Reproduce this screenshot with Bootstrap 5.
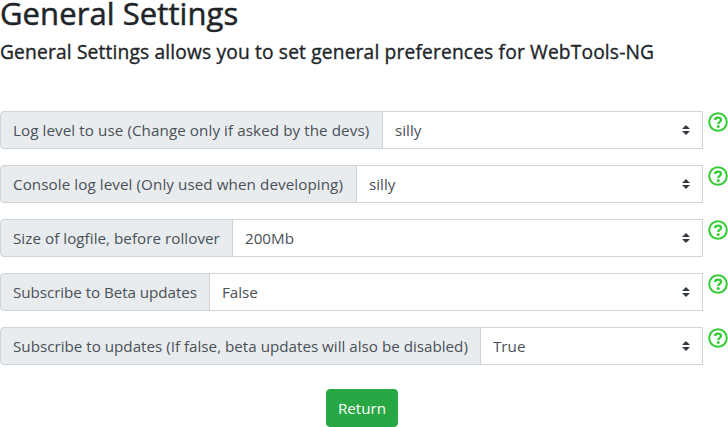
<!DOCTYPE html>
<html lang="en">
<head>
<meta charset="utf-8">
<meta name="viewport" content="width=device-width, initial-scale=1">
<title>General Settings</title>
<link href="https://cdn.jsdelivr.net/npm/bootstrap@5.3.0/dist/css/bootstrap.min.css" rel="stylesheet">
<style>
body { font-family: "Open Sans", "Noto Sans", sans-serif; font-size: 16px; color: #212529; overflow: hidden; }
.page-title { font-size: 31px; line-height: 26px; margin: 0 0 14px; font-weight: 500; -webkit-text-stroke: .5px #212529; letter-spacing: .08px; }
.page-lead { font-size: 19.2px; line-height: 24px; font-weight: 500; margin: 0 0 47px; -webkit-text-stroke: .35px #212529; letter-spacing: .16px; }
.page-title span, .page-lead span, .setting-label span { white-space: nowrap; }
.setting-row { margin-bottom: 16px; }
.setting-row .input-group { width: 703px; height: 38px; }
.setting-label { background: #e9ecef; border-color: #ced4da; color: #495057; font-size: 15.2px; padding: 0 12px; border-radius: 4px; }
.setting-select { border-color: #ced4da; border-radius: 0; color: #495057; font-size: 15.2px; padding: 0 28px 0 12px;
  background: #fff url("data:image/svg+xml,%3csvg xmlns='http://www.w3.org/2000/svg' viewBox='0 0 4 5'%3e%3cpath fill='%23343a40' d='M2 0L0 2h4zm0 5L0 3h4z'/%3e%3c/svg%3e") no-repeat right 12px center / 8px 10px; }
.w-log { width: 383px; letter-spacing: .08px; } .w-console { width: 357px; letter-spacing: .08px; } .w-size { width: 233px; letter-spacing: .04px; } .w-beta { width: 210px; letter-spacing: -.06px; } .w-updates { width: 481px; }
.help-icon { width: 20px; height: 20px; margin: .5px 0 0 5px; color: #32cd32; }
.return-btn { background: #28a745; border-color: #28a745; color: #fff; width: 72px; height: 38px; padding: 0; font-size: 15.2px; border-radius: 4px; margin: 8px 0 0 326px; }
</style>
</head>
<body>
<svg class="d-none" xmlns="http://www.w3.org/2000/svg">
  <symbol id="help" viewBox="0 0 20 20">
    <circle cx="10" cy="10" r="8.8" fill="none" stroke="currentColor" stroke-width="2"/>
    <path d="M6.9 8.1C7.3 6.4 8.4 5.7 10 5.7c1.8 0 3 .9 3 2.3 0 1.9-2.8 2-2.8 4" fill="none" stroke="currentColor" stroke-width="2.3"/>
    <circle cx="10.2" cy="14.4" r="1.5" fill="currentColor"/>
  </symbol>
</svg>
<main>
  <h2 class="page-title"><span>General Settings</span></h2>
  <h5 class="page-lead"><span>General Settings allows you to set general preferences for WebTools-NG</span></h5>
  <div class="setting-row d-flex align-items-start">
    <div class="input-group flex-nowrap flex-shrink-0">
      <label class="input-group-text setting-label w-log" for="s1"><span>Log level to use (Change only if asked by the devs)</span></label>
      <select class="form-select setting-select" id="s1"><option>silly</option></select>
    </div>
    <svg class="help-icon flex-shrink-0"><use href="#help"/></svg>
  </div>
  <div class="setting-row d-flex align-items-start">
    <div class="input-group flex-nowrap flex-shrink-0">
      <label class="input-group-text setting-label w-console" for="s2"><span>Console log level (Only used when developing)</span></label>
      <select class="form-select setting-select" id="s2"><option>silly</option></select>
    </div>
    <svg class="help-icon flex-shrink-0"><use href="#help"/></svg>
  </div>
  <div class="setting-row d-flex align-items-start">
    <div class="input-group flex-nowrap flex-shrink-0">
      <label class="input-group-text setting-label w-size" for="s3"><span>Size of logfile, before rollover</span></label>
      <select class="form-select setting-select" id="s3"><option>200Mb</option></select>
    </div>
    <svg class="help-icon flex-shrink-0"><use href="#help"/></svg>
  </div>
  <div class="setting-row d-flex align-items-start">
    <div class="input-group flex-nowrap flex-shrink-0">
      <label class="input-group-text setting-label w-beta" for="s4"><span>Subscribe to Beta updates</span></label>
      <select class="form-select setting-select" id="s4"><option>False</option></select>
    </div>
    <svg class="help-icon flex-shrink-0"><use href="#help"/></svg>
  </div>
  <div class="setting-row d-flex align-items-start">
    <div class="input-group flex-nowrap flex-shrink-0">
      <label class="input-group-text setting-label w-updates" for="s5"><span>Subscribe to updates (If false, beta updates will also be disabled)</span></label>
      <select class="form-select setting-select" id="s5"><option>True</option></select>
    </div>
    <svg class="help-icon flex-shrink-0"><use href="#help"/></svg>
  </div>
  <button type="button" class="btn btn-success return-btn">Return</button>
</main>
<script src="https://cdn.jsdelivr.net/npm/bootstrap@5.3.0/dist/js/bootstrap.bundle.min.js"></script>
</body>
</html>
